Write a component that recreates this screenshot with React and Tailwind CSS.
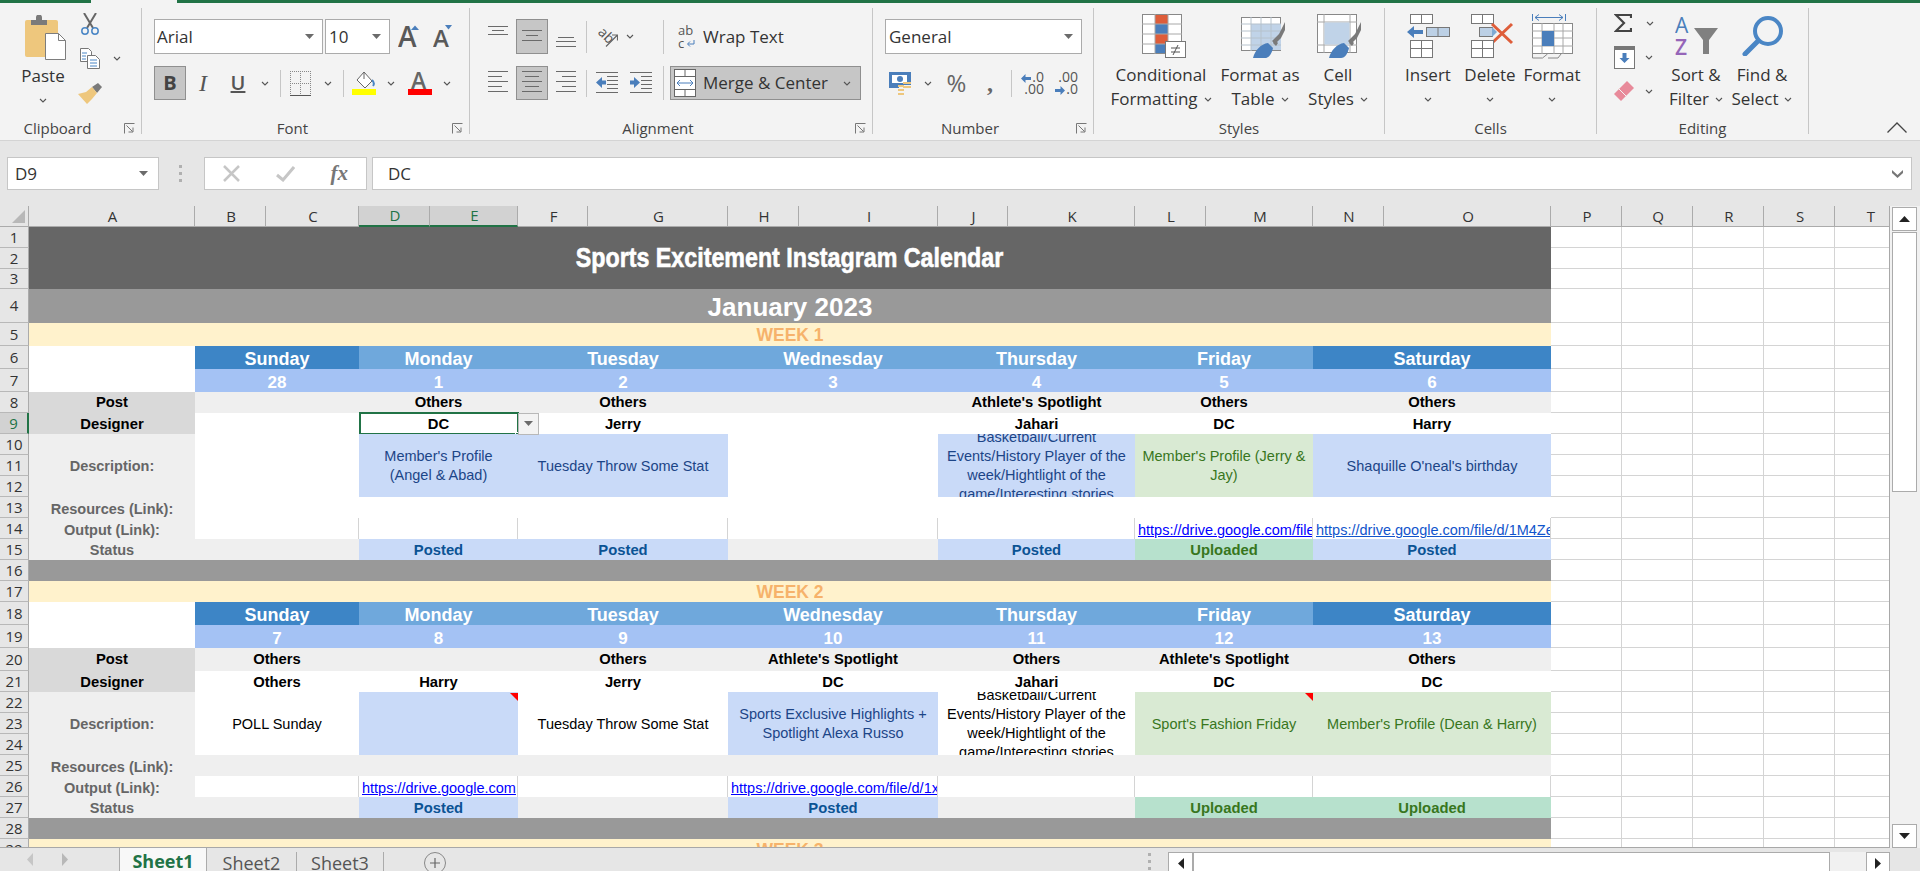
import { Fragment } from 'react'

const uiFont = "font-['Open_Sans','Noto_Sans',sans-serif]"
const cellFont = "font-['Liberation_Sans',Arial,sans-serif]"

const Chevron = ({ className = '' }) => (
  <svg width="8" height="5" viewBox="0 0 8 5" className={`shrink-0 ${className}`}>
    <path d="M1 1l3 3 3-3" fill="none" stroke="#555" strokeWidth="1.1" />
  </svg>
)

const Caret = ({ className = '' }) => (
  <svg width="9" height="5" viewBox="0 0 9 5" className={`shrink-0 ${className}`}>
    <path d="M0 0h9L4.500 5z" fill="#6b6b6b" />
  </svg>
)

const Launcher = () => (
  <svg width="11" height="11" viewBox="0 0 11 11" className="absolute right-[6px] top-[9px]">
    <path d="M.5 10.500V.5h10M2.500 2.500l6 6M9 4.500V9H4.500" fill="none" stroke="#777" strokeWidth="1" />
  </svg>
)

const PasteIcon = () => (
  <svg width="41" height="45" viewBox="0 0 41 45">
    <rect x="0" y="5" width="33" height="37" rx="2" fill="#eec77d" />
    <path d="M6 10V5h5V2.500a3 3 0 0 1 6 0V5h5v5z" fill="#7a7a7a" />
    <path d="M20.500 18.500h13l7 7v19h-20z" fill="#fff" stroke="#7d7d7d" />
    <path d="M33.500 18.500v7h7" fill="none" stroke="#7d7d7d" />
  </svg>
)

const CutIcon = () => (
  <svg width="20" height="22" viewBox="0 0 20 22">
    <path d="M4 0l9 15M16 0L7 15" stroke="#666" strokeWidth="2" fill="none" />
    <circle cx="5" cy="18" r="3.200" fill="none" stroke="#4a86c5" strokeWidth="1.500" />
    <circle cx="15" cy="18" r="3.200" fill="none" stroke="#4a86c5" strokeWidth="1.500" />
  </svg>
)

const CopyIcon = () => (
  <svg width="20" height="21" viewBox="0 0 20 21">
    <path d="M.5.500h8l3 3v10h-11z" fill="#fff" stroke="#777" />
    <path d="M7.500 7.500h8l4 4v9h-12z" fill="#fff" stroke="#777" />
    <path d="M2 5h5M2 8h4M2 11h4M10 12h7M10 15h7M10 18h7" stroke="#4a86c5" />
  </svg>
)

const PainterIcon = () => (
  <svg width="24" height="21" viewBox="0 0 24 21">
    <path d="M14 4l6-4 4 4-5 6z" fill="#7a7a7a" />
    <path d="M0 11l8-2 6-5 5 6-5 6-5 5z" fill="#eec77d" />
  </svg>
)

const BigA = ({ up }) => (
  <svg width="22" height="24" viewBox="0 0 22 24">
    <text x="0" y="22" fontSize={up ? 28 : 24} fontWeight="600" fontFamily="Open Sans" fill="#595959">A</text>
    <path d={up ? 'M13 5l4-4.500L21 5z' : 'M12 0h7l-3.500 4.500z'} fill="#4a7ebb" />
  </svg>
)

const Lines = ({ rows, w = 20, h = 26 }) => (
  <svg width={w} height={h} viewBox={`0 0 ${w} ${h}`}>
    {rows.map(([x1, x2, y]) => (
      <path key={y} d={`M${x1} ${y + 0.5}H${x2}`} stroke="#6a6a6a" />
    ))}
  </svg>
)

const BordersIcon = () => (
  <svg width="21" height="26" viewBox="0 0 21 26">
    <path d="M.5 1v24M10.500 1v24M20.500 1v24M0 1.500h21M0 13.500h21" stroke="#888" strokeDasharray="1 1" />
    <path d="M0 25.500h21" stroke="#555" />
  </svg>
)

const FillIcon = () => (
  <svg width="24" height="24" viewBox="0 0 24 24">
    <path d="M12 1l8 9-7 7-8-8z" fill="#fff" stroke="#666" />
    <path d="M12 1v7" stroke="#666" />
    <path d="M20 9c2 2 2.500 4 1 6" fill="none" stroke="#4a86c5" strokeWidth="2" />
    <rect y="18" width="24" height="6" fill="#ffff00" />
  </svg>
)

const ColorA = () => (
  <div className="relative w-[24px] h-[24px]">
    <svg width="24" height="24" viewBox="0 0 24 24">
      <text x="3" y="18" fontSize="23" fontWeight="600" fontFamily="Open Sans" fill="#666">A</text>
      <rect y="18" width="24" height="6" fill="#ff0000" />
    </svg>
  </div>
)

const OrientIcon = () => (
  <svg width="20" height="20" viewBox="0 0 20 20">
    <text x="0" y="8" fontSize="14" fontFamily="Open Sans" fill="#555" transform="rotate(45 2 6)">ab</text>
    <path d="M8 19.500L19 8.500M14 8h5.500v5.500" fill="none" stroke="#666" strokeWidth="1.200" />
  </svg>
)

const IndentIcon = ({ dir }) => (
  <svg width="22" height="22" viewBox="0 0 22 22">
    <path d="M0 .5h22M0 20.500h22M11 4.500h11M11 8.500h11M11 12.500h11M11 16.500h11" stroke="#6a6a6a" />
    {dir === 'dec'
      ? <path d="M0 10.500L6 5v3.500h4v4H6V16z" fill="#4a7ebb" />
      : <path d="M10 10.500L4 5v3.500H0v4h4V16z" fill="#4a7ebb" />}
  </svg>
)

const WrapIcon = () => (
  <svg width="18" height="24" viewBox="0 0 18 24">
    <text x="0" y="10" fontSize="13" fontFamily="Open Sans" fill="#555">ab</text>
    <text x="0" y="23" fontSize="13" fontFamily="Open Sans" fill="#555">c</text>
    <path d="M16 15v4h-6M12 16.500L9.500 19l2.500 2.500" fill="none" stroke="#4a7ebb" />
  </svg>
)

const MergeIcon = () => (
  <svg width="22" height="28" viewBox="0 0 22 28">
    <rect x=".5" y=".5" width="21" height="27" fill="#fff" stroke="#666" />
    <path d="M0 7.500h22M0 20.500h22M11 0v7M11 21v7" stroke="#666" />
    <path d="M3 14h16M6 11l-3 3 3 3M16 11l3 3-3 3" fill="none" stroke="#4a7ebb" />
  </svg>
)

const CurrencyIcon = () => (
  <svg width="23" height="23" viewBox="0 0 23 23">
    <path d="M0 0h22v13H10v3H0z" fill="#4a7ebb" />
    <rect x="3" y="3" width="15" height="8" fill="#fff" />
    <circle cx="11" cy="7" r="3" fill="#4a7ebb" />
    <path d="M9 14h6M14 11h8M9 18h6M9 22h6M14 15h8" stroke="#eec77d" strokeWidth="2" />
  </svg>
)

const ArrowSmall = ({ flip }) => (
  <svg width="10" height="9" viewBox="0 0 10 9" className="inline-block mr-px">
    <path d={flip ? 'M10 4.500L5.500 0v3H0v3h5.500v3z' : 'M0 4.500L4.500 0v3H10v3H4.500v3z'} fill="#4a7ebb" />
  </svg>
)

const ConditionalIcon = () => (
  <svg width="44" height="44" viewBox="0 0 44 44">
    <rect x=".5" y=".5" width="39" height="39" fill="#fff" stroke="#888" />
    <rect x="13" y="1" width="13" height="9" fill="#de5d3a" />
    <rect x="13" y="10" width="13" height="10" fill="#4a7ebb" />
    <rect x="13" y="20" width="13" height="10" fill="#de5d3a" />
    <rect x="13" y="30" width="13" height="9" fill="#4a7ebb" />
    <path d="M13 0v40M26 0v40M0 10h40M0 20h40M0 30h40" stroke="#a8a8a8" />
    <rect x="23.500" y="27.500" width="20" height="16" fill="#fff" stroke="#777" />
    <path d="M29 34h9M29 38h9M31 41l5-10" stroke="#555" fill="none" />
  </svg>
)

const Brush = () => (
  <g>
    <path d="M31 27l7-7 6-12v8l-4 8-6 6z" fill="#7a7a7a" />
    <path d="M34 26l3 3-2 3-3-3z" fill="#7a7a7a" />
    <path d="M12 44c2-8 8-14 15-15l5 5c-1 5-4 10-8 10z" fill="#4a7ebb" />
  </g>
)

const TableIcon = () => (
  <svg width="44" height="44" viewBox="0 0 44 44">
    <rect x=".5" y="3.500" width="39" height="33" fill="#fff" stroke="#888" />
    <rect x="10" y="10" width="30" height="26" fill="#c0d3e8" />
    <path d="M10 3v34M20 3v34M30 3v34M0 10h40M0 17h40M0 24h40M0 31h40" stroke="#b6c2cc" />
    <Brush />
  </svg>
)

const CellStyleIcon = () => (
  <svg width="44" height="44" viewBox="0 0 44 44">
    <rect x=".5" y=".5" width="39" height="38" fill="#fff" stroke="#888" />
    <path d="M7 0v39M33 0v39M0 8h40M0 31h40" stroke="#a8a8a8" />
    <rect x="7.500" y="8.500" width="25" height="22" fill="#c0d3e8" />
    <Brush />
  </svg>
)

const SmallGrid = ({ x, y, rows = 1 }) => (
  <g fill="#fff" stroke="#777">
    <rect x={x + 0.5} y={y + 0.5} width="22" height={rows === 1 ? 9 : 17} />
    <path d={`M${x + 11.5} ${y}v${rows === 1 ? 9 : 17}`} />
    {rows > 1 && <path d={`M${x} ${y + 8.5}h22`} />}
  </g>
)

const InsertIcon = () => (
  <svg width="43" height="44" viewBox="0 0 43 44">
    <SmallGrid x={3} y={0} />
    <rect x="19.500" y="13.500" width="23" height="9" fill="#bcd0e5" stroke="#777" />
    <path d="M31 13v9" stroke="#777" />
    <path d="M0 18l7-6v4h9v4H7v4z" fill="#4a7ebb" />
    <SmallGrid x={3} y={26} rows={2} />
  </svg>
)

const DeleteIcon = () => (
  <svg width="43" height="44" viewBox="0 0 43 44">
    <SmallGrid x={0} y={0} />
    <rect x="8.500" y="13.500" width="13" height="9" fill="#bcd0e5" stroke="#777" />
    <path d="M21 13l5 5-5 5z" fill="#7fa9d3" />
    <path d="M21 10l20 19M41 10L21 29" stroke="#de5d3a" strokeWidth="3" />
    <SmallGrid x={0} y={26} rows={2} />
  </svg>
)

const FormatIcon = () => (
  <svg width="42" height="45" viewBox="0 0 42 45">
    <path d="M.5 0v7M33.500 0v7M3 3.500h28M7 .5l-4 3 4 3M27 .5l4 3-4 3" fill="none" stroke="#4a7ebb" />
    <rect x=".5" y="9.500" width="40" height="30" fill="#fff" stroke="#888" />
    <path d="M10 9v31M22 9v31M31 9v31M0 17h41M0 24h41M0 32h41" stroke="#a8a8a8" />
    <rect x="10" y="17" width="12" height="15" fill="#4a7ebb" />
    <path d="M.5 40v4h10l5-4M16 44h10l3-4" fill="none" stroke="#888" />
  </svg>
)

const SigmaIcon = () => (
  <svg width="18" height="19" viewBox="0 0 18 19">
    <path d="M17 4V1H2l8 8-8 8h15v-3" fill="none" stroke="#444" strokeWidth="2.200" />
  </svg>
)

const FillDown = () => (
  <svg width="21" height="23" viewBox="0 0 21 23">
    <rect x=".5" y=".5" width="20" height="22" fill="#fff" stroke="#777" />
    <rect width="21" height="4" fill="#777" />
    <path d="M10.500 17l-5-5h3V7h4v5h3z" fill="#4a7ebb" />
  </svg>
)

const EraserIcon = () => (
  <svg width="20" height="20" viewBox="0 0 20 20">
    <path d="M13 0l7 7L7 20l-7-7z" fill="#e88a9a" />
    <path d="M5 8l7 7" stroke="#f3f3f3" />
  </svg>
)

const SortIcon = () => (
  <svg width="43" height="40" viewBox="0 0 43 40">
    <text x="0" y="17" fontSize="21" fontFamily="Open Sans" fill="#4a7ebb">A</text>
    <text x="0" y="39" fontSize="21" fontFamily="Open Sans" fontWeight="600" fill="#9565b8">Z</text>
    <path d="M19 12h24l-9 12v14h-6V24z" fill="#808080" />
  </svg>
)

const FindIcon = () => (
  <svg width="42" height="40" viewBox="0 0 42 40">
    <circle cx="26" cy="15" r="13" fill="none" stroke="#4a86c5" strokeWidth="4" />
    <path d="M16 25L3 38" stroke="#4a86c5" strokeWidth="5" strokeLinecap="round" />
  </svg>
)

// big ribbon button, two text lines or one plus a chevron underneath
const BigButton = ({ w, icon, iconClass = '', top, bottom }) => (
  <div className={`flex flex-col items-center pt-[6px] ${w}`}>
    <div className={`h-[44px] flex items-center justify-center ${iconClass}`}>{icon}</div>
    <div className="mt-[5px] leading-[24px] whitespace-nowrap">{top}</div>
    <div className="leading-[24px] h-[24px] flex items-center gap-[6px] whitespace-nowrap">
      {bottom}
      <Chevron />
    </div>
  </div>
)

const Group = ({ w, label, launcher, children }) => (
  <div className={`my-[5px] h-[126px] shrink-0 flex flex-col border-r border-[#c6c6c6] ${w}`}>
    <div className="flex-1 min-h-0">{children}</div>
    <div className={`relative h-[20px] text-center leading-[28px] text-[15px] text-[#444] ${launcher ? 'pr-[26px]' : ''}`}>
      {label}
      {launcher && <Launcher />}
    </div>
  </div>
)

const Ribbon = () => (
  <div className={`${uiFont} text-[#333] text-[17px]`}>
    <div className="flex h-[3px]">
      <div className="w-[91px] bg-[#217346]" />
      <div className="w-[86px] bg-[#f3f3f3]" />
      <div className="flex-1 bg-[#217346]" />
    </div>
    <div className="flex h-[138px] bg-[#f3f3f3] border-b border-[#d4d4d4]">
      <Group w="w-[142px]" label="Clipboard" launcher>
        <div className="flex">
          <div className="ml-[6px] w-[74px] flex flex-col items-center pt-[7px]">
            <div className="ml-[4px]"><PasteIcon /></div>
            <div className="mt-[4px] leading-[24px]">Paste</div>
            <div className="h-[24px] flex items-center"><Chevron /></div>
          </div>
          <div className="flex flex-col pt-[5px]">
            <CutIcon />
            <div className="mt-[13px] flex items-center gap-[13px]"><CopyIcon /><Chevron /></div>
            <div className="mt-[14px] -ml-[2px]"><PainterIcon /></div>
          </div>
        </div>
      </Group>

      <Group w="w-[328px]" label="Font" launcher>
        <div className="pt-[11px] pl-[12px] flex items-center h-[46px]">
          <div className="w-[169px] h-[35px] bg-white border border-[#ababab] flex items-center justify-between pl-[2px] pr-[8px]">Arial<Caret /></div>
          <div className="ml-[2px] w-[65px] h-[35px] bg-white border border-[#ababab] flex items-center justify-between pl-[3px] pr-[8px]">10<Caret /></div>
          <div className="ml-[8px] w-[35px]"><BigA up /></div>
          <div><BigA /></div>
        </div>
        <div className="mt-[12px] pl-[12px] flex items-center h-[34px]">
          <div className="w-[32px] h-[34px] bg-[#c6c6c6] border border-[#8f8f8f] flex items-center justify-center font-bold text-[20px] text-[#444]">B</div>
          <div className="w-[34px] text-center font-['Liberation_Serif',serif] italic text-[24px] text-[#555]">I</div>
          <div className="w-[36px] text-center underline text-[20px] text-[#555] font-semibold">U</div>
          <div className="w-[18px] flex justify-center"><Chevron /></div>
          <div className="ml-[6px] w-px h-[27px] bg-[#c6c6c6]" />
          <div className="ml-[9px]"><BordersIcon /></div>
          <Chevron className="ml-[13px]" />
          <div className="ml-[11px] w-px h-[27px] bg-[#c6c6c6]" />
          <div className="ml-[8px]"><FillIcon /></div>
          <Chevron className="ml-[11px]" />
          <div className="ml-[13px]"><ColorA /></div>
          <Chevron className="ml-[11px]" />
        </div>
      </Group>

      <Group w="w-[403px]" label="Alignment" launcher>
        <div className="pt-[11px] pl-[18px] flex items-center h-[46px]">
          <Lines rows={[[0, 20, 2], [4, 16, 6], [0, 20, 10]]} />
          <div className="ml-[8px] w-[32px] h-[35px] bg-[#c6c6c6] border border-[#8f8f8f] flex items-center justify-center">
            <Lines rows={[[0, 20, 6], [4, 16, 11], [0, 20, 16]]} />
          </div>
          <div className="ml-[8px]"><Lines rows={[[2, 18, 13], [0, 20, 17], [0, 20, 22]]} /></div>
          <div className="ml-[10px] w-px h-[32px] bg-[#c6c6c6]" />
          <div className="ml-[11px]"><OrientIcon /></div>
          <Chevron className="ml-[8px]" />
          <div className="ml-[29px] w-px h-[34px] bg-[#c6c6c6]" />
          <div className="ml-[14px]"><WrapIcon /></div>
          <div className="ml-[7px]">Wrap Text</div>
        </div>
        <div className="mt-[12px] pl-[18px] flex items-center h-[34px]">
          <Lines rows={[[0, 20, 1], [0, 14, 6], [0, 20, 11], [0, 14, 16], [0, 20, 21]]} />
          <div className="ml-[8px] w-[32px] h-[34px] bg-[#c6c6c6] border border-[#8f8f8f] flex items-center justify-center">
            <Lines rows={[[0, 20, 1], [3, 17, 6], [0, 20, 11], [3, 17, 16], [0, 20, 21]]} />
          </div>
          <div className="ml-[8px]"><Lines rows={[[0, 20, 1], [6, 20, 6], [0, 20, 11], [6, 20, 16], [0, 20, 21]]} /></div>
          <div className="ml-[10px] w-px h-[27px] bg-[#c6c6c6]" />
          <div className="ml-[9px]"><IndentIcon dir="dec" /></div>
          <div className="ml-[12px]"><IndentIcon dir="inc" /></div>
          <div className="ml-[11px] w-px h-[34px] bg-[#c6c6c6]" />
          <div className="ml-[6px] w-[191px] h-[34px] bg-[#c6c6c6] border border-[#8f8f8f] flex items-center pl-[3px] pr-[9px]">
            <MergeIcon />
            <div className="ml-[7px] flex-1 whitespace-nowrap">Merge &amp; Center</div>
            <Chevron />
          </div>
        </div>
      </Group>

      <Group w="w-[221px]" label="Number" launcher>
        <div className="pt-[11px] pl-[12px] h-[46px]">
          <div className="w-[197px] h-[35px] bg-white border border-[#ababab] flex items-center justify-between pl-[3px] pr-[8px]">General<Caret /></div>
        </div>
        <div className="mt-[12px] pl-[16px] flex items-center h-[34px]">
          <CurrencyIcon />
          <Chevron className="ml-[12px]" />
          <div className="ml-[8px] w-[33px] text-center text-[24px] text-[#666] leading-none">%</div>
          <div className="w-[34px] text-center font-bold text-[24px] text-[#666] leading-none font-['Liberation_Serif',serif]">,</div>
          <div className="ml-[4px] w-px h-[27px] bg-[#c6c6c6]" />
          <div className="ml-[9px] grid grid-cols-[23px_34px] text-[14px] leading-[12px] text-[#555] whitespace-nowrap text-right">
            <div><ArrowSmall />.0</div>
            <div>.00</div>
            <div>.00</div>
            <div><ArrowSmall flip />.0</div>
          </div>
        </div>
      </Group>

      <Group w="w-[291px]" label="Styles">
        <div className="flex pl-[11px]">
          <BigButton w="w-[112px]" iconClass="ml-[5px]" icon={<ConditionalIcon />} top="Conditional" bottom="Formatting" />
          <BigButton w="w-[86px]" iconClass="ml-[6px]" icon={<TableIcon />} top="Format as" bottom="Table" />
          <BigButton w="w-[70px]" iconClass="ml-[2px]" icon={<CellStyleIcon />} top="Cell" bottom="Styles" />
        </div>
      </Group>

      <Group w="w-[212px]" label="Cells">
        <div className="flex pl-[12px]">
          <BigButton w="w-[62px]" icon={<InsertIcon />} top="Insert" />
          <BigButton w="w-[62px]" iconClass="ml-[4px]" icon={<DeleteIcon />} top="Delete" />
          <BigButton w="w-[62px]" iconClass="ml-[1px]" icon={<FormatIcon />} top="Format" />
        </div>
      </Group>

      <Group w="w-[212px]" label="Editing">
        <div className="flex pl-[17px]">
          <div className="w-[49px] -mt-[2px] flex flex-col">
            <div className="h-[34px] flex items-center gap-[14px]"><SigmaIcon /><Chevron /></div>
            <div className="h-[34px] flex items-center gap-[10px]"><FillDown /><Chevron /></div>
            <div className="h-[34px] flex items-center gap-[11px]"><EraserIcon /><Chevron /></div>
          </div>
          <BigButton w="w-[66px]" icon={<SortIcon />} top="Sort &" bottom="Filter" />
          <BigButton w="w-[66px]" iconClass="ml-[2px]" icon={<FindIcon />} top="Find &" bottom="Select" />
        </div>
      </Group>

      <div className="flex-1 flex items-end justify-end pr-[13px] pb-[7px]">
        <svg width="20" height="11" viewBox="0 0 20 11">
          <path d="M.5 10.500L10 1l9.500 9.500" fill="none" stroke="#444" strokeWidth="1.300" />
        </svg>
      </div>
    </div>
  </div>
)

const FormulaBar = () => (
  <div className={`${uiFont} h-[65px] bg-[#e6e6e6] pt-[16px] pl-[7px] flex items-start text-[17px] text-[#333]`}>
    <div className="w-[152px] h-[33px] bg-white border border-[#c6c6c6] flex items-center justify-between pl-[7px] pr-[10px]">D9<Caret /></div>
    <div className="ml-[20px] w-[3px] h-[33px] flex flex-col justify-center gap-[4px]">
      <div className="h-[3px] bg-[#b0b0b0]" />
      <div className="h-[3px] bg-[#b0b0b0]" />
      <div className="h-[3px] bg-[#b0b0b0]" />
    </div>
    <div className="ml-[22px] w-[163px] h-[33px] bg-white border border-[#c6c6c6] flex items-center">
      <div className="w-[54px] flex justify-center">
        <svg width="17" height="17" viewBox="0 0 17 17"><path d="M1 1l15 15M16 1L1 16" stroke="#c6c6c6" strokeWidth="2.500" /></svg>
      </div>
      <div className="w-[54px] flex justify-center">
        <svg width="19" height="16" viewBox="0 0 19 16"><path d="M1 9l6 5L18 1" fill="none" stroke="#c6c6c6" strokeWidth="3" /></svg>
      </div>
      <div className="w-[54px] text-center font-['Liberation_Serif',serif] italic font-bold text-[#777] text-[21px] leading-none">fx</div>
    </div>
    <div className="ml-[5px] w-[1540px] h-[33px] bg-white border border-[#c6c6c6] flex items-center justify-between pl-[15px] pr-[7px]">
      DC
      <svg width="13" height="9" viewBox="0 0 13 9"><path d="M1 1l5.500 5L12 1v3L6.500 9 1 4z" fill="#777" /></svg>
    </div>
  </div>
)

const letters = 'ABCDEFGHIJKLMNOPQRST'.split('')

const RowHead = ({ n, active }) => (
  <div className={`${uiFont} text-[15px] flex items-center justify-center border-b border-[#b8b8b8] border-r overflow-hidden ${active ? 'bg-[#d2d2d2] text-[#217346] border-r-2 border-r-[#217346]' : 'bg-[#e6e6e6] text-[#333] border-r-[#ababab]'}`}>
    {n}
  </div>
)

const Blank = ({ n = 5 }) =>
  Array.from({ length: n }).map((_, i) => (
    <div key={i} className="bg-white border-r border-b border-[#d4d4d4]" />
  ))

const Row = ({ n, active, children }) => (
  <>
    <RowHead n={n} active={active} />
    {children}
    <Blank />
  </>
)

const tones = {
  blue: 'bg-[#c9daf8] text-[#1c4587]',
  green: 'bg-[#d9ead3] text-[#38761d]',
  plain: 'bg-white text-black',
}

const weeks = [
  {
    start: 5,
    label: 'WEEK 1',
    dates: [28, 1, 2, 3, 4, 5, 6],
    post: ['', 'Others', 'Others', '', "Athlete's Spotlight", 'Others', 'Others'],
    designer: ['', 'DC', 'Jerry', '', 'Jahari', 'DC', 'Harry'],
    desc: [
      ['plain', ''],
      ['blue', "Member's Profile\n(Angel & Abad)"],
      ['blue', 'Tuesday Throw Some Stat'],
      ['plain', ''],
      ['blue', 'Basketball/Current\nEvents/History Player of the\nweek/Hightlight of the\ngame/Interesting stories'],
      ['green', "Member's Profile (Jerry &\nJay)"],
      ['blue', "Shaquille O'neal's birthday"],
    ],
    resourcesBg: 'bg-white',
    links: [null, null, null, null, null, ['https://drive.google.com/file', 'text-[#0000ff]'], ['https://drive.google.com/file/d/1M4Ze', 'text-[#1155cc]']],
    status: ['', 'Posted', 'Posted', '', 'Posted', 'Uploaded', 'Posted'],
  },
  {
    start: 17,
    label: 'WEEK 2',
    dates: [7, 8, 9, 10, 11, 12, 13],
    post: ['Others', '', 'Others', "Athlete's Spotlight", 'Others', "Athlete's Spotlight", 'Others'],
    designer: ['Others', 'Harry', 'Jerry', 'DC', 'Jahari', 'DC', 'DC'],
    desc: [
      ['plain', 'POLL Sunday'],
      ['blue', '', true],
      ['plain', 'Tuesday Throw Some Stat'],
      ['blue', 'Sports Exclusive Highlights +\nSpotlight Alexa Russo'],
      ['plain', 'Basketball/Current\nEvents/History Player of the\nweek/Hightlight of the\ngame/Interesting stories'],
      ['green', "Sport's Fashion Friday", true],
      ['green', "Member's Profile (Dean & Harry)"],
    ],
    resourcesBg: 'bg-[#efefef]',
    links: [null, ['https://drive.google.com', 'text-[#0000ff]'], null, ['https://drive.google.com/file/d/1x', 'text-[#0000ff]'], null, null, null],
    status: ['', 'Posted', '', 'Posted', '', 'Uploaded', 'Uploaded'],
  },
]

const dayNames = ['Sunday', 'Monday', 'Tuesday', 'Wednesday', 'Thursday', 'Friday', 'Saturday']
const spanCenter = 'col-span-2 flex items-center justify-center overflow-hidden whitespace-nowrap leading-none'
const labelText = 'text-[#666] font-bold text-[14.500px] leading-none'

const Week = ({ w }) => {
  const s = w.start
  return (
    <>
      <Row n={s}>
        <div className="col-span-15 bg-[#fff2cc] pt-[2px] flex items-center justify-center font-bold text-[17.500px] leading-none text-[#f6b26b]">{w.label}</div>
      </Row>
      <Row n={s + 1}>
        <div className="bg-white" />
        {dayNames.map((d, i) => (
          <div key={d} className={`${spanCenter} pt-[4px] font-bold text-[18px] text-white ${i === 0 || i === 6 ? 'bg-[#3d85c6]' : 'bg-[#6fa8dc]'}`}>{d}</div>
        ))}
      </Row>
      <Row n={s + 2}>
        <div className="bg-white" />
        {w.dates.map((d) => (
          <div key={d} className={`${spanCenter} pt-[4px] bg-[#a4c2f4] font-bold text-[17px] text-white`}>{d}</div>
        ))}
      </Row>
      <Row n={s + 3}>
        <div className="bg-[#d9d9d9] flex items-center justify-center font-bold text-[14.800px] leading-none text-black">Post</div>
        {w.post.map((t, i) => (
          <div key={i} className={`${spanCenter} bg-[#efefef] font-bold text-[14.800px] text-black`}>{t}</div>
        ))}
      </Row>
      <Row n={s + 4} active={s === 5}>
        <div className="bg-[#d9d9d9] pt-[2px] flex items-center justify-center font-bold text-[14.800px] leading-none text-black">Designer</div>
        {w.designer.map((t, i) => (
          <div key={i} className={`${spanCenter} pt-[2px] bg-white font-bold text-[14.800px] text-black relative overflow-visible`}>
            {t}
            {s === 5 && i === 1 && (
              <>
                <div className="absolute -top-px left-0 right-[-1px] bottom-[-1px] border-2 border-[#217346]" />
                <div className="absolute right-[-3px] bottom-[-4px] w-[6px] h-[6px] bg-[#217346] border border-white" />
                <div className="absolute top-0 right-[-21px] w-[21px] h-[22px] bg-[#f3f3f3] border border-[#b8b8b8] flex items-center justify-center z-10"><Caret /></div>
              </>
            )}
          </div>
        ))}
      </Row>
      <RowHead n={s + 5} />
      <div className={`row-span-3 bg-[#efefef] pt-[2px] flex items-center justify-center ${labelText}`}>Description:</div>
      {w.desc.map(([tone, t, note], i) => (
        <div key={i} className={`col-span-2 row-span-3 relative pt-[2px] flex items-center justify-center overflow-hidden text-center text-[14.500px] leading-[19px] whitespace-pre-line ${tones[tone]}`}>
          {t}
          {note && (
            <svg width="8" height="8" viewBox="0 0 8 8" className="absolute top-px right-0"><path d="M0 0h8v8z" fill="#ff0000" /></svg>
          )}
        </div>
      ))}
      <Blank />
      <RowHead n={s + 6} /><Blank />
      <RowHead n={s + 7} /><Blank />
      <Row n={s + 8}>
        <div className={`bg-[#efefef] pt-[4px] flex items-center justify-center whitespace-nowrap ${labelText}`}>Resources (Link):</div>
        <div className={`col-span-14 ${w.resourcesBg}`} />
      </Row>
      <Row n={s + 9}>
        <div className={`bg-[#efefef] pt-[4px] flex items-center justify-center whitespace-nowrap ${labelText}`}>Output (Link):</div>
        {w.links.map((l, i) => (
          <div key={i} className="col-span-2 bg-white border-r border-[#d4d4d4] pl-[3px] flex items-end overflow-hidden whitespace-nowrap text-[14.500px] leading-[17px]">
            {l && <span className={`underline ${l[1]}`}>{l[0]}</span>}
          </div>
        ))}
      </Row>
      <Row n={s + 10}>
        <div className={`bg-[#efefef] pt-[2px] flex items-center justify-center ${labelText}`}>Status</div>
        {w.status.map((t, i) => (
          <div key={i} className={`${spanCenter} pt-[2px] font-bold text-[14.800px] ${t === 'Posted' ? 'bg-[#c9daf8] text-[#0b5394]' : t === 'Uploaded' ? 'bg-[#b7e1cd] text-[#38761d]' : 'bg-[#efefef]'}`}>{t}</div>
        ))}
      </Row>
      <Row n={s + 11}>
        <div className="col-span-15 bg-[#999999]" />
      </Row>
    </>
  )
}

const Sheet = () => (
  <div className={`${cellFont} flex-1 min-w-0 overflow-hidden border-r border-b border-[#a8a8a8]`}>
    <div className="grid grid-cols-[29px_166px_71px_93px_71px_88px_70px_140px_71px_139px_70px_127px_71px_107px_71px_167px_71px_71px_71px_71px_71px] grid-rows-[21px_21px_21px_20px_34px_23px_23px_23px_21px_21px_21px_21px_21px_21px_21px_21px_21px_21px_23px_23px_23px_21px_21px_21px_21px_21px_21px_21px_21px_21px_23px]">
      <div className="bg-[#e6e6e6] border-b border-r border-[#ababab] flex items-end justify-end pr-[3px] pb-[3px]">
        <svg width="13" height="13" viewBox="0 0 13 13"><path d="M13 0v13H0z" fill="#b8b8b8" /></svg>
      </div>
      {letters.map((c) => {
        const sel = c === 'D' || c === 'E'
        return (
          <div key={c} className={`${uiFont} text-[15px] pl-[2px] flex items-center justify-center border-r border-[#ababab] ${sel ? 'bg-[#d2d2d2] text-[#217346] border-b-2 border-b-[#217346]' : 'bg-[#e6e6e6] text-[#333] border-b border-b-[#ababab]'}`}>{c}</div>
        )
      })}
      <Row n={1}>
        <div className="col-span-15 row-span-3 bg-[#666666] flex items-center justify-center">
          <span className="font-bold text-[28px] text-white scale-x-[0.83] whitespace-nowrap [-webkit-text-stroke:0.6px_white]">Sports Excitement Instagram Calendar</span>
        </div>
      </Row>
      <Row n={2} />
      <Row n={3} />
      <Row n={4}>
        <div className="col-span-15 bg-[#999999] pt-[2px] flex items-center justify-center font-bold text-[26px] leading-none text-white">January 2023</div>
      </Row>
      {weeks.map((w) => (
        <Fragment key={w.start}>
          <Week w={w} />
        </Fragment>
      ))}
      <Row n={29}>
        <div className="col-span-15 bg-[#fff2cc] pt-[2px] flex items-center justify-center font-bold text-[17.500px] leading-none text-[#f6b26b]">WEEK 3</div>
      </Row>
    </div>
  </div>
)

const ScrollBtn = ({ d }) => (
  <div className="w-[25px] h-[24px] bg-white border border-[#ababab] flex items-center justify-center shrink-0">
    <svg width="11" height="6" viewBox="0 0 11 6"><path d={d} fill="#222" /></svg>
  </div>
)

const VScroll = () => (
  <div className="w-[30px] bg-[#f1f1f1] flex flex-col pl-[2px] pt-[1px]">
    <ScrollBtn d="M0 6h11L5.500 0z" />
    <div className="mt-px w-[25px] h-[260px] bg-white border border-[#ababab]" />
    <div className="flex-1" />
    <ScrollBtn d="M0 0h11L5.500 6z" />
  </div>
)

const Tabs = () => (
  <div className={`${uiFont} h-[23px] bg-[#e6e6e6] flex items-start overflow-hidden text-[18px] leading-[26px] text-[#555]`}>
    <div className="w-[119px] h-[23px] flex items-center pl-[27px] gap-[27px]">
      <svg width="7" height="13" viewBox="0 0 7 13"><path d="M6 0v13L0 6.500z" fill="#c6c6c6" /></svg>
      <svg width="7" height="13" viewBox="0 0 7 13"><path d="M1 0v13l6-6.500z" fill="#b8b8b8" /></svg>
    </div>
    <div className="w-[88px] h-[23px] bg-[#f8f8f8] border-x border-[#ababab] text-center font-bold text-[#217346]">Sheet1</div>
    <div className="w-[90px] h-[19px] mt-[4px] border-r border-[#ababab] text-center leading-[22px]">Sheet2</div>
    <div className="w-[87px] h-[19px] mt-[4px] border-r border-[#ababab] text-center leading-[22px]">Sheet3</div>
    <div className="ml-[40px] mt-[4px] w-[22px] h-[22px] rounded-full border border-[#888] flex items-center justify-center shrink-0">
      <svg width="10" height="10" viewBox="0 0 10 10"><path d="M5 0v10M0 5h10" stroke="#666" strokeWidth="1.200" /></svg>
    </div>
    <div className="flex-1" />
    <div className="mt-[5px] w-[3px] flex flex-col gap-[4px] mr-[17px]">
      <div className="h-[3px] bg-[#b0b0b0]" />
      <div className="h-[3px] bg-[#b0b0b0]" />
      <div className="h-[3px] bg-[#b0b0b0]" />
    </div>
    <div className="mt-[4px] w-[722px] h-[22px] bg-[#f1f1f1] flex">
      <div className="w-[25px] h-[22px] bg-white border border-[#ababab] flex items-center justify-center">
        <svg width="6" height="11" viewBox="0 0 6 11"><path d="M6 0v11L0 5.500z" fill="#222" /></svg>
      </div>
      <div className="w-[637px] h-[22px] bg-white border border-[#ababab]" />
      <div className="flex-1" />
      <div className="w-[24px] h-[22px] bg-white border border-[#ababab] flex items-center justify-center">
        <svg width="6" height="11" viewBox="0 0 6 11"><path d="M0 0v11l6-5.500z" fill="#222" /></svg>
      </div>
    </div>
    <div className="w-[30px]" />
  </div>
)

export default function App() {
  return (
    <div className="w-[1920px] h-[871px] flex flex-col overflow-hidden bg-[#e6e6e6]">
      <Ribbon />
      <FormulaBar />
      <div className="h-[643px] flex overflow-hidden">
        <Sheet />
        <VScroll />
      </div>
      <Tabs />
    </div>
  )
}
